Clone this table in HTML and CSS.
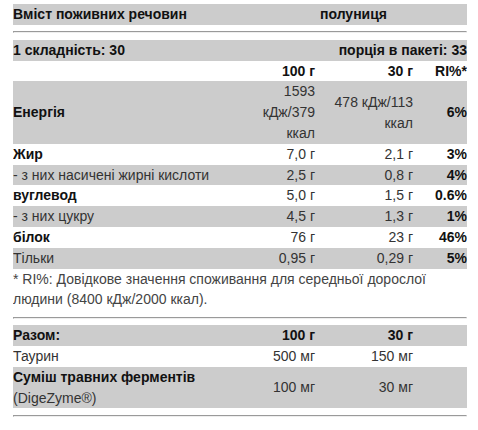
FILE: index.html
```html
<!DOCTYPE html>
<html lang="uk">
<head>
    <meta charset="UTF-8">
    <title>Вміст поживних речовин</title>
    <link rel="stylesheet" href="styles.css">
</head>
<body>
    <div class="nutri">
        <table class="nt nt-head">
            <tr class="shade">
                <td class="lbl">Вміст поживних речовин</td>
                <td class="flavor">полуниця</td>
            </tr>
        </table>
        <hr>
        <table class="nt">
            <colgroup>
                <col class="c1"><col class="c2"><col class="c3"><col class="c4">
            </colgroup>
            <tr class="shade">
                <td class="lbl">1 складність: 30</td>
                <td class="num b" colspan="3">порція в пакеті: 33</td>
            </tr>
            <tr>
                <td></td>
                <td class="num b">100 г</td>
                <td class="num b">30 г</td>
                <td class="num b">RI%*</td>
            </tr>
            <tr class="shade">
                <td class="lbl">Енергія</td>
                <td class="num">1593 кДж/379 ккал</td>
                <td class="num">478 кДж/113 ккал</td>
                <td class="num b">6%</td>
            </tr>
            <tr>
                <td class="lbl">Жир</td>
                <td class="num">7,0 г</td>
                <td class="num">2,1 г</td>
                <td class="num b">3%</td>
            </tr>
            <tr class="shade">
                <td>- з них насичені жирні кислоти</td>
                <td class="num">2,5 г</td>
                <td class="num">0,8 г</td>
                <td class="num b">4%</td>
            </tr>
            <tr>
                <td class="lbl">вуглевод</td>
                <td class="num">5,0 г</td>
                <td class="num">1,5 г</td>
                <td class="num b">0.6%</td>
            </tr>
            <tr class="shade">
                <td>- з них цукру</td>
                <td class="num">4,5 г</td>
                <td class="num">1,3 г</td>
                <td class="num b">1%</td>
            </tr>
            <tr>
                <td class="lbl">білок</td>
                <td class="num">76 г</td>
                <td class="num">23 г</td>
                <td class="num b">46%</td>
            </tr>
            <tr class="shade">
                <td>Тільки</td>
                <td class="num">0,95 г</td>
                <td class="num">0,29 г</td>
                <td class="num b">5%</td>
            </tr>
        </table>
        <p class="note">* RI%: Довідкове значення споживання для середньої дорослої людини (8400 кДж/2000 ккал).</p>
        <hr>
        <table class="nt">
            <colgroup>
                <col class="c1"><col class="c2"><col class="c3"><col class="c4">
            </colgroup>
            <tr class="shade">
                <td class="lbl">Разом:</td>
                <td class="num b">100 г</td>
                <td class="num b">30 г</td>
                <td></td>
            </tr>
            <tr>
                <td>Таурин</td>
                <td class="num">500 мг</td>
                <td class="num">150 мг</td>
                <td></td>
            </tr>
            <tr class="shade">
                <td><span class="lbl">Суміш травних ферментів</span><br>(DigeZyme®)</td>
                <td class="num">100 мг</td>
                <td class="num">30 мг</td>
                <td></td>
            </tr>
        </table>
        <hr>
    </div>
</body>
</html>
```
FILE: styles.css
```css
body {
    margin: 4px 11px 0 13px; background: #fff; color: #333;
    font-family: "Liberation Sans", Arial, sans-serif; font-size: 14px; line-height: 20.8px;
}
.nt { width: 100%; border-collapse: collapse; table-layout: fixed; }
.nt td { padding: 0; vertical-align: middle; }
.nt .c1 { width: 227px; }
.nt .c2 { width: 75px; }
.nt .c3 { width: 98px; }
.nt .c4 { width: 54px; }
.shade td { background: #ccc; }
.lbl, .b { font-weight: bold; color: #111; }
.num { text-align: right; }
.flavor { font-weight: bold; color: #111; text-align: center; width: 227px; }
.note { margin: 0; color: #444; }
hr { margin: 6.5px 0; }
```
